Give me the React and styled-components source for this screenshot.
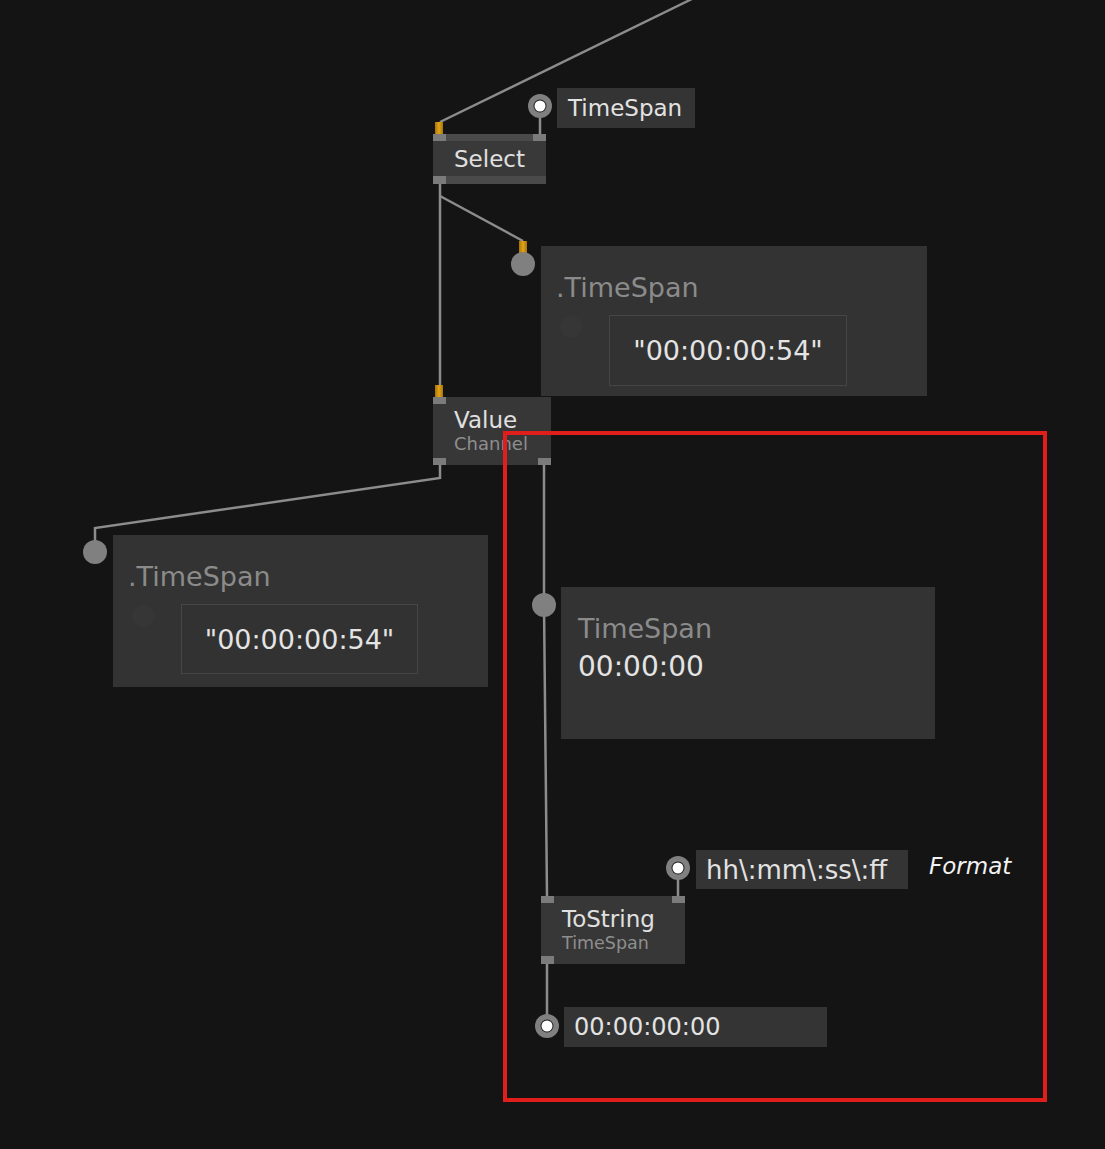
import styled, { createGlobalStyle } from "styled-components";

const GlobalStyle = createGlobalStyle`
body {
   margin: 0;
   background: #141414;
   font-family: "DejaVu Sans", sans-serif;
}
`;

const LINK = "#8c8c8c";

const Canvas = styled.div`
position: relative;
width: 1105px;
height: 1149px;
overflow: hidden;
background: #141414;
font-family: "DejaVu Sans", sans-serif;
`;

const Wires = styled.svg`
position: absolute;
left: 0;
top: 0;
`;

const Node = styled.div`
position: absolute;
left: ${(p) => p.$x}px;
top: ${(p) => p.$y}px;
width: ${(p) => p.$w}px;
height: ${(p) => p.$h}px;
display: flex;
flex-direction: column;
background: ${(p) => (p.$bands ? "#393939" : "#373737")};
`;

const PinBar = styled.div`
display: flex;
justify-content: space-between;
height: ${(p) => p.$h || 7}px;
background: ${(p) => (p.$band ? "#4a4a4a" : "transparent")};
`;

const Pin = styled.div`
width: 13px;
height: 100%;
background: ${(p) => (p.$on ? "#7b7b7b" : "transparent")};
`;

const NodeBody = styled.div`
flex: 1;
display: flex;
flex-direction: column;
justify-content: center;
padding-left: 21px;
`;

const NodeTitle = styled.div`
font-size: 23px;
line-height: 26px;
color: #e0e0e0;
`;

const NodeSub = styled.div`
font-size: ${(p) => p.$size || 18}px;
line-height: 22px;
color: #8e8e8e;
`;

const IOBox = styled.div`
position: absolute;
left: ${(p) => p.$x}px;
top: ${(p) => p.$y}px;
width: ${(p) => p.$w}px;
height: ${(p) => p.$h}px;
box-sizing: border-box;
display: flex;
align-items: center;
padding-left: ${(p) => p.$pad || 11}px;
background: #343434;
color: #e2e2e2;
font-size: ${(p) => p.$size || 23}px;
white-space: nowrap;
`;

const Panel = styled.div`
position: absolute;
left: ${(p) => p.$x}px;
top: ${(p) => p.$y}px;
width: ${(p) => p.$w}px;
height: ${(p) => p.$h}px;
box-sizing: border-box;
padding-left: ${(p) => p.$pad}px;
background: #333333;
white-space: nowrap;
`;

const PanelLabel = styled.div`
margin-top: 25px;
font-size: 27px;
line-height: 34px;
color: #8b8b8b;
`;

const PanelValue = styled.div`
font-size: 28px;
line-height: 42px;
color: #e4e4e4;
`;

const FieldRow = styled.div`
display: flex;
align-items: flex-start;
margin-top: 10px;
`;

const GhostDot = styled.div`
width: 22px;
height: 22px;
margin: 1px 27px 0 ${(p) => p.$indent}px;
border-radius: 50%;
background: #363636;
`;

const Field = styled.div`
width: ${(p) => p.$w}px;
height: ${(p) => p.$h}px;
box-sizing: border-box;
display: flex;
align-items: center;
justify-content: center;
border: 1px solid #464646;
background: #323232;
color: #e4e4e4;
font-size: 27px;
`;

const PinName = styled.div`
position: absolute;
left: ${(p) => p.$x}px;
top: ${(p) => p.$y}px;
font-size: 23px;
font-style: italic;
color: #f2f2f2;
`;

const Highlight = styled.div`
position: absolute;
left: 503px;
top: 431px;
width: 544px;
height: 671px;
box-sizing: border-box;
border: 4px solid #e01f1c;
pointer-events: none;
`;

const OrangePin = ({ x, y }) => (
   <rect x={x} y={y} width="8" height="12" fill="url(#amber)" />
);

const Socket = ({ x, y, open }) => (
   <g>
      <circle cx={x} cy={y} r="12" fill="#808080" />
      {open && <circle cx={x} cy={y} r="6.5" fill="#1e1e1e" />}
      {open && <circle cx={x} cy={y} r="5.5" fill="#ffffff" />}
   </g>
);

const Links = () => (
   <Wires width="1105" height="1149">
      <defs>
         <linearGradient id="amber" x1="0" x2="1" y1="0" y2="0">
            <stop offset="0" stopColor="#a87408" />
            <stop offset="0.5" stopColor="#e2a416" />
            <stop offset="1" stopColor="#a87408" />
         </linearGradient>
      </defs>
      <g stroke={LINK} strokeWidth="2.5" fill="none">
         <polyline points="692,-1 440,122" />
         <polyline points="540,117 540,134" />
         <polyline points="440,184 440,385" />
         <polyline points="440,196 523,241" />
         <polyline points="440,465 440,478 95,528 95,541" />
         <polyline points="544,465 544,605 547,896" />
         <polyline points="678,868 678,896" />
         <polyline points="547,964 547,1026" />
      </g>
      <OrangePin x={435} y={122} />
      <OrangePin x={519} y={241} />
      <OrangePin x={435} y={385} />
      <Socket x={540} y={106} open />
      <Socket x={523} y={264} />
      <Socket x={95} y={552} />
      <Socket x={544} y={605} />
      <Socket x={678} y={868} open />
      <Socket x={547} y={1026} open />
   </Wires>
);

export default function App() {
   return (
      <>
         <GlobalStyle />
         <Canvas>
            <Links />

            <IOBox $x={557} $y={88} $w={138} $h={40}>TimeSpan</IOBox>

            <Node $x={433} $y={134} $w={113} $h={50} $bands>
               <PinBar $band>
                  <Pin $on />
                  <Pin $on />
               </PinBar>
               <NodeBody>
                  <NodeTitle>Select</NodeTitle>
               </NodeBody>
               <PinBar $band $h={8}>
                  <Pin $on />
                  <Pin />
               </PinBar>
            </Node>

            <Panel $x={541} $y={246} $w={386} $h={150} $pad={15}>
               <PanelLabel>.TimeSpan</PanelLabel>
               <FieldRow>
                  <GhostDot $indent={4} />
                  <Field $w={238} $h={71}>"00:00:00:54"</Field>
               </FieldRow>
            </Panel>

            <Node $x={433} $y={397} $w={118} $h={68}>
               <PinBar>
                  <Pin $on />
                  <Pin />
               </PinBar>
               <NodeBody>
                  <NodeTitle>Value</NodeTitle>
                  <NodeSub>Channel</NodeSub>
               </NodeBody>
               <PinBar>
                  <Pin $on />
                  <Pin $on />
               </PinBar>
            </Node>

            <Panel $x={113} $y={535} $w={375} $h={152} $pad={15}>
               <PanelLabel>.TimeSpan</PanelLabel>
               <FieldRow>
                  <GhostDot $indent={4} />
                  <Field $w={237} $h={70}>"00:00:00:54"</Field>
               </FieldRow>
            </Panel>

            <Panel $x={561} $y={587} $w={374} $h={152} $pad={17}>
               <PanelLabel>TimeSpan</PanelLabel>
               <PanelValue>00:00:00</PanelValue>
            </Panel>

            <IOBox $x={696} $y={850} $w={212} $h={39} $pad={10} $size={26}>
               hh\:mm\:ss\:ff
            </IOBox>
            <PinName $x={929} $y={853}>Format</PinName>

            <Node $x={541} $y={896} $w={144} $h={68}>
               <PinBar>
                  <Pin $on />
                  <Pin $on />
               </PinBar>
               <NodeBody>
                  <NodeTitle>ToString</NodeTitle>
                  <NodeSub $size={17.5}>TimeSpan</NodeSub>
               </NodeBody>
               <PinBar $h={8}>
                  <Pin $on />
                  <Pin />
               </PinBar>
            </Node>

            <IOBox $x={564} $y={1007} $w={263} $h={40} $pad={10} $size={24}>
               00:00:00:00
            </IOBox>

            <Highlight />
         </Canvas>
      </>
   );
}
